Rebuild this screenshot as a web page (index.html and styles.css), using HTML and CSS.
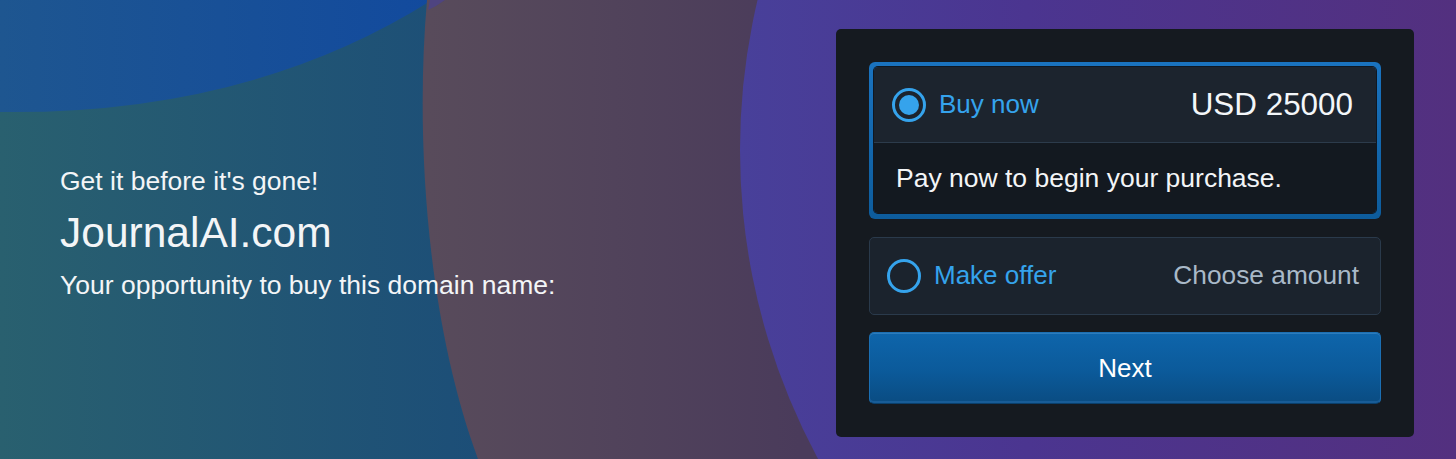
FILE: index.html
```html
<!DOCTYPE html>
<html lang="en">
<head>
<meta charset="utf-8">
<title>JournalAI.com</title>
<link rel="stylesheet" href="styles.css">
</head>
<body>
<div class="page">
  <svg class="backdrop" viewBox="0 0 1456 459" preserveAspectRatio="none" aria-hidden="true">
    <defs>
      <linearGradient id="gBase" gradientUnits="userSpaceOnUse" x1="0" y1="0" x2="560" y2="0">
        <stop offset="0" stop-color="#29606f"/>
        <stop offset="1" stop-color="#1a4b79"/>
      </linearGradient>
      <linearGradient id="gTop" gradientUnits="userSpaceOnUse" x1="0" y1="0" x2="440" y2="0">
        <stop offset="0" stop-color="#1e5690"/>
        <stop offset="1" stop-color="#124a9e"/>
      </linearGradient>
      <linearGradient id="gMauve" gradientUnits="userSpaceOnUse" x1="430" y1="0" x2="800" y2="0">
        <stop offset="0" stop-color="#584b5b"/>
        <stop offset="1" stop-color="#4a3b5b"/>
      </linearGradient>
      <linearGradient id="gIndigo" gradientUnits="userSpaceOnUse" x1="740" y1="0" x2="1456" y2="0">
        <stop offset="0" stop-color="#48409a"/>
        <stop offset="0.4" stop-color="#4b3590"/>
        <stop offset="1" stop-color="#53307f"/>
      </linearGradient>
    </defs>
    <rect x="0" y="0" width="1456" height="459" fill="url(#gBase)"/>
    <path d="M0,0 L432,0 Q250,115 0,112 Z" fill="url(#gTop)"/>
    <path d="M427,0 C414,150 430,330 478,459 L1456,459 L1456,0 Z" fill="url(#gMauve)"/>
    <path d="M430,0 L445,0 Q437,6 428,10 Z" fill="#4a4190" opacity="0.7"/>
    <circle cx="1390" cy="150" r="650" fill="url(#gIndigo)"/>
  </svg>

  <main class="layout">
    <section class="pitch">
      <p class="pitch-kicker">Get it before it's gone!</p>
      <h1 class="pitch-domain">JournalAI.com</h1>
      <p class="pitch-lead">Your opportunity to buy this domain name:</p>
    </section>

    <section class="card">
      <div class="option option-selected">
        <div class="option-inner">
          <div class="option-head">
            <span class="radio radio-on"></span>
            <span class="option-label">Buy now</span>
            <span class="option-price">USD 25000</span>
          </div>
          <div class="option-body">Pay now to begin your purchase.</div>
        </div>
      </div>

      <div class="option option-plain">
        <div class="option-head">
          <span class="radio"></span>
          <span class="option-label">Make offer</span>
          <span class="option-hint">Choose amount</span>
        </div>
      </div>

      <button class="next-btn" type="button">Next</button>
    </section>
  </main>
</div>
</body>
</html>
```

FILE: styles.css
```css
html, body {
  margin: 0;
  padding: 0;
}

body {
  width: 1456px;
  height: 459px;
  overflow: hidden;
  font-family: "Liberation Sans", Arial, Helvetica, sans-serif;
  color: #f3f5f7;
}

.page {
  position: relative;
  width: 1456px;
  height: 459px;
  overflow: hidden;
}

.backdrop {
  position: absolute;
  inset: 0;
  width: 100%;
  height: 100%;
  display: block;
}

.layout {
  position: relative;
  z-index: 1;
  height: 459px;
  display: flex;
  align-items: center;
  justify-content: space-between;
  padding: 7px 42px 0 60px;
  box-sizing: border-box;
}

/* Left pitch */
.pitch {
  display: flex;
  flex-direction: column;
  gap: 12px;
}

.pitch-kicker,
.pitch-lead {
  margin: 0;
  font-size: 26.5px;
  line-height: 30px;
  font-weight: 400;
}

.pitch-domain {
  margin: 0;
  font-size: 42.5px;
  line-height: 50px;
  font-weight: 300;
}

/* Card */
.card {
  width: 578px;
  height: 408px;
  box-sizing: border-box;
  padding: 33px;
  background: #151a20;
  border-radius: 5px;
  display: flex;
  flex-direction: column;
  gap: 17.5px;
}

.option {
  border-radius: 6px;
  box-sizing: border-box;
}

.option-selected {
  height: 157px;
  padding: 5px 5px 6px 5px;
  background: linear-gradient(to bottom, #1a73bf, #0d5c9c);
}

.option-inner {
  height: 100%;
  display: flex;
  flex-direction: column;
  border-radius: 4px;
  overflow: hidden;
  box-shadow: 0 0 0 1px #0f1822;
}

.option-selected .option-head {
  height: 76px;
  background: #1c242e;
  border-bottom: 1px solid #2c3b4b;
  padding: 0 23px 0 18px;
}

.option-body {
  flex: 1;
  background: #131920;
  display: flex;
  align-items: center;
  padding-left: 22px;
  font-size: 26.5px;
  color: #f3f5f7;
}

.option-plain {
  height: 78px;
  background: #1b232d;
  border: 1px solid #2a3a4b;
  border-radius: 5px;
}

.option-plain .option-head {
  height: 100%;
  padding: 0 21px 0 17px;
}

.option-head {
  display: flex;
  align-items: center;
  box-sizing: border-box;
}

.radio {
  width: 34px;
  height: 34px;
  box-sizing: border-box;
  border: 3px solid #35a3ec;
  border-radius: 50%;
  display: flex;
  align-items: center;
  justify-content: center;
  flex: none;
}

.radio-on::after {
  content: "";
  width: 20px;
  height: 20px;
  border-radius: 50%;
  background: #35a3ec;
}

.option-label {
  margin-left: 13px;
  font-size: 26px;
  color: #35a3ec;
}

.option-price {
  margin-left: auto;
  font-size: 31.4px;
  color: #f3f6f9;
}

.option-hint {
  margin-left: auto;
  font-size: 26.3px;
  color: #a9b9c8;
}

.next-btn {
  height: 72px;
  width: 100%;
  flex: none;
  border: 1px solid #1b6fb3;
  border-bottom-color: #0a3f6b;
  border-radius: 5px;
  background: linear-gradient(to bottom, #0e65ab 0%, #0b5a9a 55%, #0a4c82 100%);
  box-shadow: inset 0 1px 0 rgba(120, 180, 230, 0.3), inset 0 -2px 0 rgba(60, 130, 200, 0.3);
  color: #ffffff;
  font-family: "Liberation Sans", Arial, Helvetica, sans-serif;
  font-size: 26px;
  cursor: pointer;
  padding: 0;
}
```
